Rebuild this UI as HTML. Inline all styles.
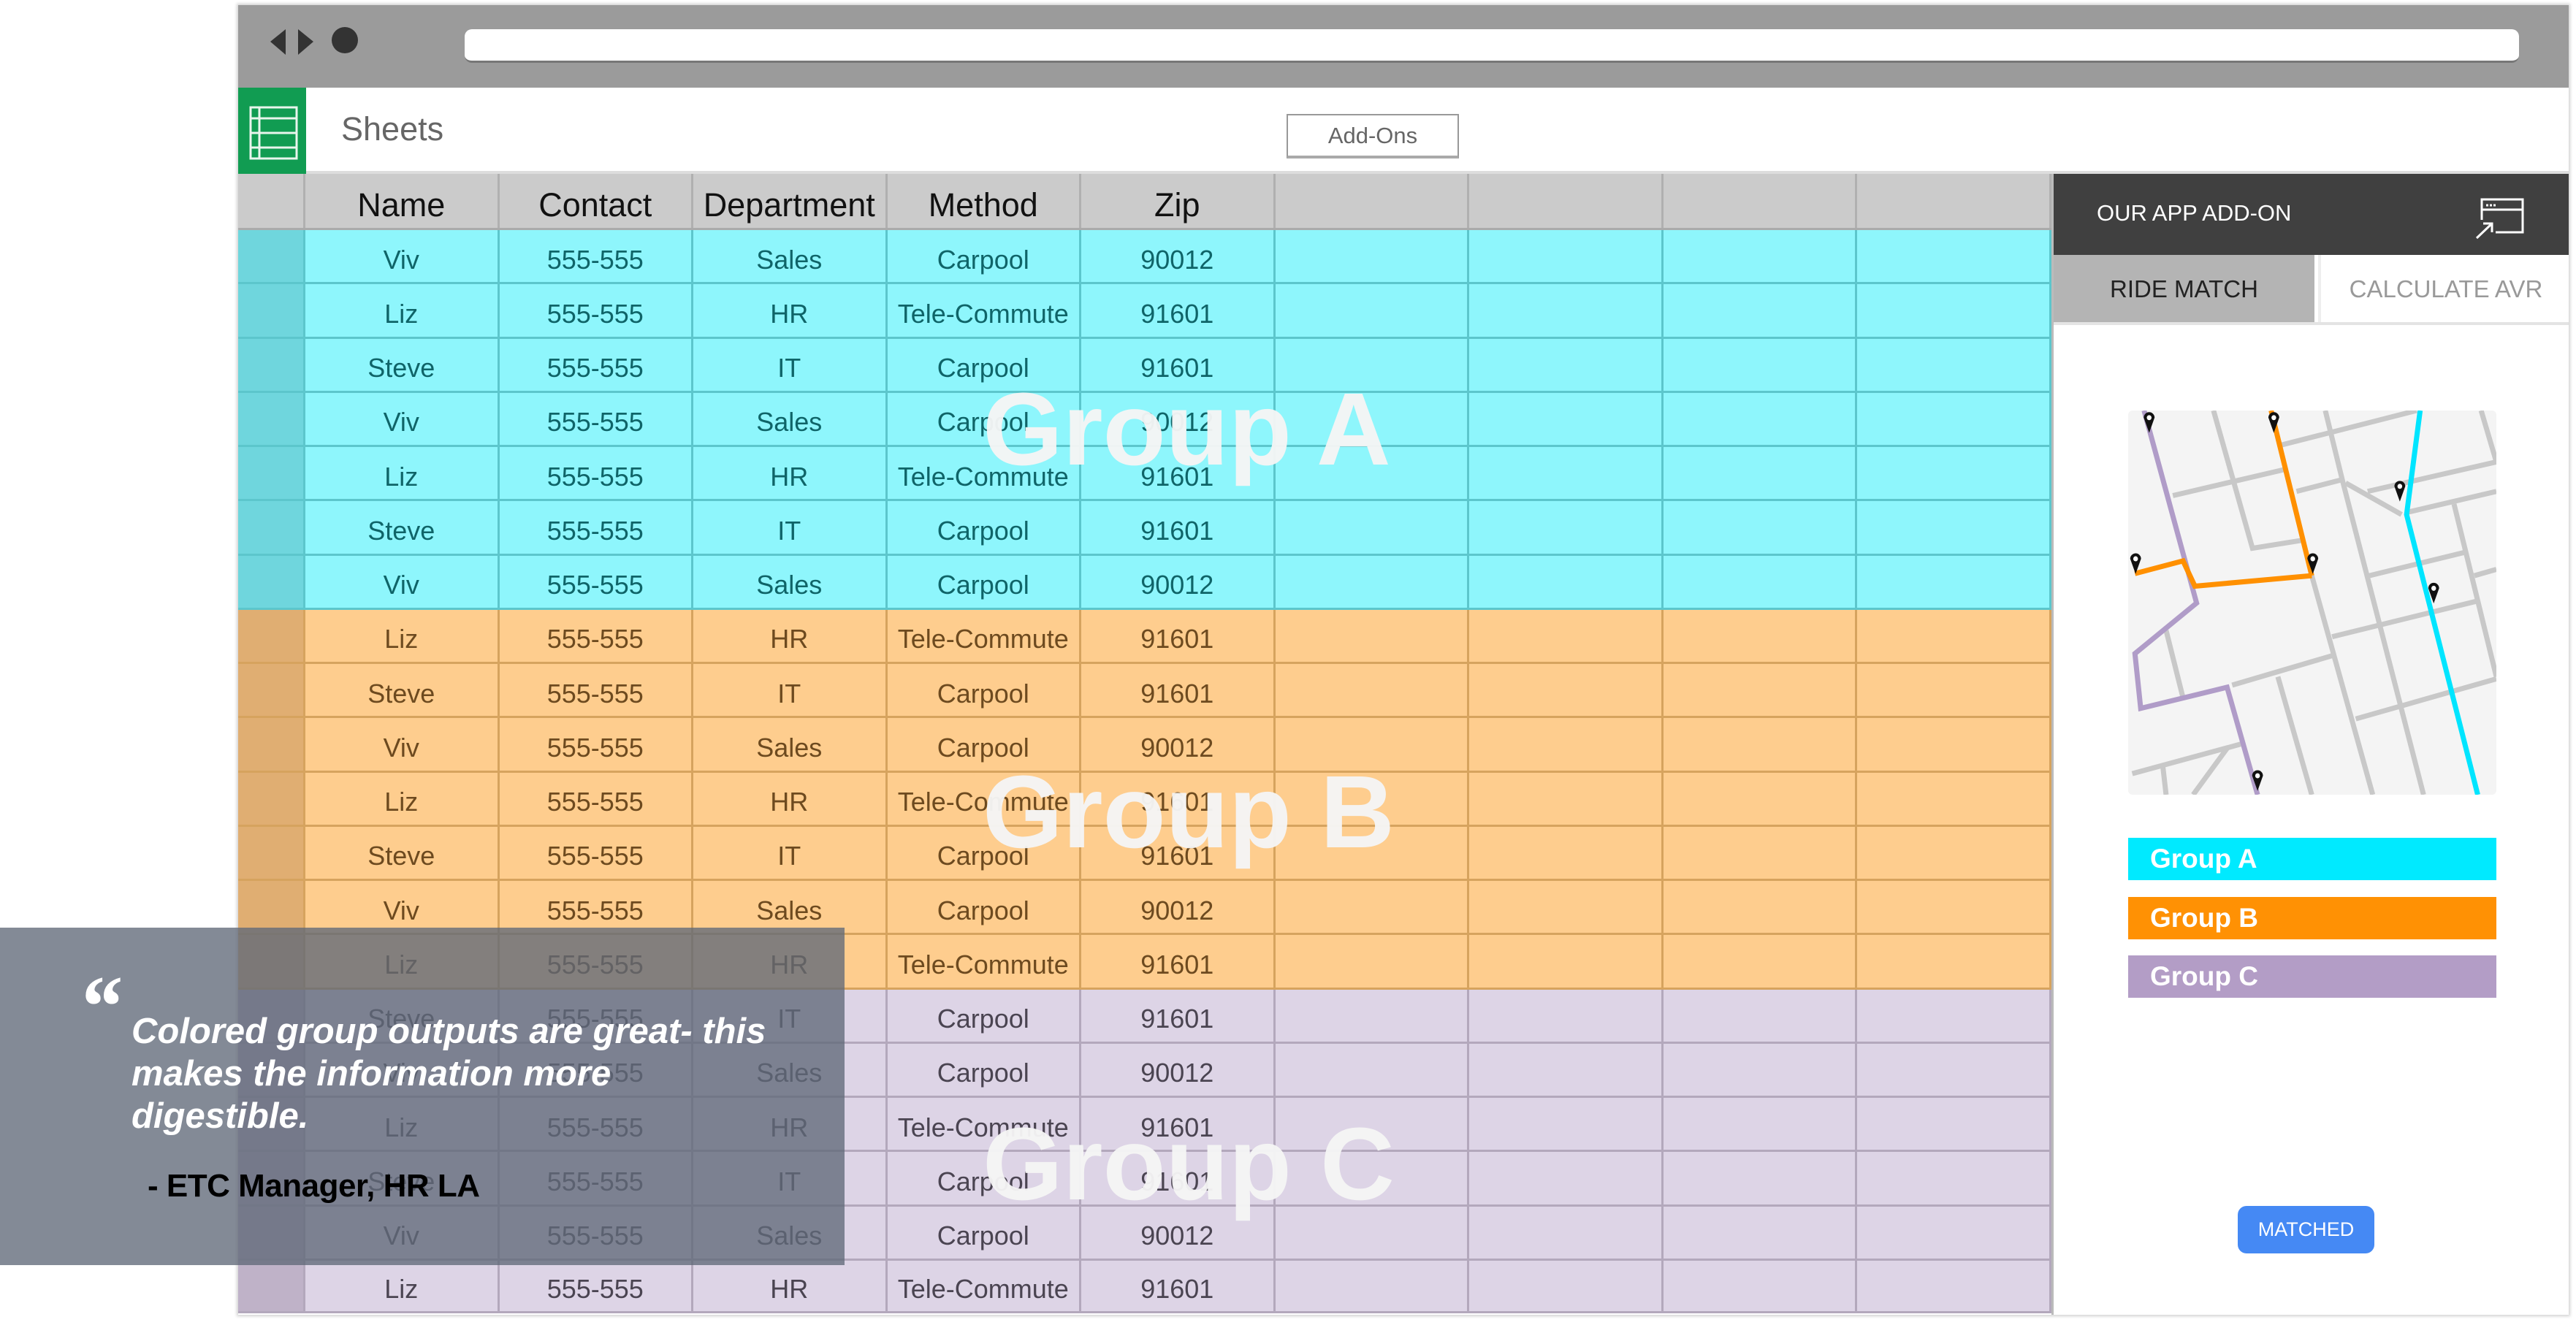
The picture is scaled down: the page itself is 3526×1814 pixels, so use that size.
<!DOCTYPE html>
<html><head><meta charset="utf-8"><style>
*{box-sizing:border-box;margin:0;padding:0}
body{width:3526px;height:1814px;background:#fff;position:relative;overflow:hidden;font-family:"Liberation Sans",Arial,sans-serif}
.abs{position:absolute}
#win{position:absolute;left:326px;top:7px;width:3190px;height:1793px;background:#fff;box-shadow:0 0 4px 2px rgba(0,0,0,.18)}
#top{position:absolute;left:0;top:0;width:100%;height:113px;background:#9b9b9b}
#url{position:absolute;left:310px;top:33px;width:2812px;height:46px;background:#fff;border-radius:10px;border-bottom:3px solid #777}
#app{position:absolute;left:0;top:113px;width:100%;height:118px;background:#fff;border-bottom:4px solid #ddd}
.tbl{position:absolute;left:326px;top:238px;width:2482px}
.row{display:flex;height:74.25px;border-bottom:3px solid}
.row>*{flex:0 0 265.5px;border-right:3px solid;display:flex;align-items:center;justify-content:center;font-size:36px;padding-top:10px}
.row>i{flex:0 0 92px}
.hd{height:77px;background:#cbcbcb;border-color:#aaa}
.hd>*{border-color:#b0b0b0;font-size:45px;color:#111;padding-top:12px}
.a{background:#8ef6fc;border-color:#5cc6cc;color:#0f6468}
.a>*{border-color:#5cc6cc}.a>i{background:#6fd6dd}
.b{background:#fecd8e;border-color:#d6a35e;color:#6d4a1f}
.b>*{border-color:#d6a35e}.b>i{background:#e0ae72}
.c{background:#ddd4e6;border-color:#b3a8bc;color:#4a4451}
.c>*{border-color:#b3a8bc}.c>i{background:#bfb2c8}
.big{position:absolute;font-weight:bold;font-size:141px;color:rgba(245,245,245,.96);left:1345px;white-space:nowrap}
#panel{position:absolute;left:2808px;top:238px;width:708px;height:1562px;background:#fff;border-left:3px solid #bbb}
.leg{position:absolute;left:102px;width:504px;height:58px;color:#fff;font-weight:bold;font-size:37px;padding-left:30px;line-height:58px}
</style></head><body>
<div id="win">
 <div id="top">
  <svg class="abs" style="left:0;top:0" width="200" height="113"><polygon points="44,50 65,33 65,68" fill="#333"/><polygon points="82,33 103,50 82,68" fill="#333"/><circle cx="146" cy="48" r="18" fill="#333"/></svg>
  <div id="url"></div>
 </div>
 <div id="app">
  <div class="abs" style="left:0;top:0;width:93px;height:118px;background:#119c52"></div>
  <svg class="abs" style="left:0;top:0" width="93" height="118" fill="none" stroke="#e8f5ec" stroke-width="3"><rect x="17" y="27" width="63" height="70"/><line x1="17" y1="42" x2="80" y2="42"/><line x1="17" y1="62" x2="80" y2="62"/><line x1="17" y1="82" x2="80" y2="82"/><line x1="29" y1="27" x2="29" y2="97"/></svg>
  <div class="abs" style="left:141px;top:31px;font-size:45px;color:#666">Sheets</div>
  <div class="abs" style="left:1435px;top:36px;width:236px;height:61px;border:2px solid #999;border-bottom:4px solid #aaa;font-size:31px;color:#666;text-align:center;line-height:56px">Add-Ons</div>
 </div>
</div>
<div class="tbl">
<div class="row hd"><i></i><b style="font-weight:normal">Name</b><b style="font-weight:normal">Contact</b><b style="font-weight:normal">Department</b><b style="font-weight:normal">Method</b><b style="font-weight:normal">Zip</b><b></b><b></b><b></b><b></b></div>
<div class="row a"><i></i><span>Viv</span><span>555-555</span><span>Sales</span><span>Carpool</span><span>90012</span><span></span><span></span><span></span><span></span></div>
<div class="row a"><i></i><span>Liz</span><span>555-555</span><span>HR</span><span>Tele-Commute</span><span>91601</span><span></span><span></span><span></span><span></span></div>
<div class="row a"><i></i><span>Steve</span><span>555-555</span><span>IT</span><span>Carpool</span><span>91601</span><span></span><span></span><span></span><span></span></div>
<div class="row a"><i></i><span>Viv</span><span>555-555</span><span>Sales</span><span>Carpool</span><span>90012</span><span></span><span></span><span></span><span></span></div>
<div class="row a"><i></i><span>Liz</span><span>555-555</span><span>HR</span><span>Tele-Commute</span><span>91601</span><span></span><span></span><span></span><span></span></div>
<div class="row a"><i></i><span>Steve</span><span>555-555</span><span>IT</span><span>Carpool</span><span>91601</span><span></span><span></span><span></span><span></span></div>
<div class="row a"><i></i><span>Viv</span><span>555-555</span><span>Sales</span><span>Carpool</span><span>90012</span><span></span><span></span><span></span><span></span></div>
<div class="row b"><i></i><span>Liz</span><span>555-555</span><span>HR</span><span>Tele-Commute</span><span>91601</span><span></span><span></span><span></span><span></span></div>
<div class="row b"><i></i><span>Steve</span><span>555-555</span><span>IT</span><span>Carpool</span><span>91601</span><span></span><span></span><span></span><span></span></div>
<div class="row b"><i></i><span>Viv</span><span>555-555</span><span>Sales</span><span>Carpool</span><span>90012</span><span></span><span></span><span></span><span></span></div>
<div class="row b"><i></i><span>Liz</span><span>555-555</span><span>HR</span><span>Tele-Commute</span><span>91601</span><span></span><span></span><span></span><span></span></div>
<div class="row b"><i></i><span>Steve</span><span>555-555</span><span>IT</span><span>Carpool</span><span>91601</span><span></span><span></span><span></span><span></span></div>
<div class="row b"><i></i><span>Viv</span><span>555-555</span><span>Sales</span><span>Carpool</span><span>90012</span><span></span><span></span><span></span><span></span></div>
<div class="row b"><i></i><span>Liz</span><span>555-555</span><span>HR</span><span>Tele-Commute</span><span>91601</span><span></span><span></span><span></span><span></span></div>
<div class="row c"><i></i><span>Steve</span><span>555-555</span><span>IT</span><span>Carpool</span><span>91601</span><span></span><span></span><span></span><span></span></div>
<div class="row c"><i></i><span>Viv</span><span>555-555</span><span>Sales</span><span>Carpool</span><span>90012</span><span></span><span></span><span></span><span></span></div>
<div class="row c"><i></i><span>Liz</span><span>555-555</span><span>HR</span><span>Tele-Commute</span><span>91601</span><span></span><span></span><span></span><span></span></div>
<div class="row c"><i></i><span>Steve</span><span>555-555</span><span>IT</span><span>Carpool</span><span>91601</span><span></span><span></span><span></span><span></span></div>
<div class="row c"><i></i><span>Viv</span><span>555-555</span><span>Sales</span><span>Carpool</span><span>90012</span><span></span><span></span><span></span><span></span></div>
<div class="row c" style="height:72px"><i></i><span>Liz</span><span>555-555</span><span>HR</span><span>Tele-Commute</span><span>91601</span><span></span><span></span><span></span><span></span></div>
</div>
<div class="big" style="top:506px">Group A</div>
<div class="big" style="top:1030px">Group B</div>
<div class="big" style="top:1512px">Group C</div>

<div id="panel">
 <div class="abs" style="left:0;top:0;width:100%;height:111px;background:#404040"></div>
 <div class="abs" style="left:59px;top:36px;font-size:31px;color:#fff">OUR APP ADD-ON</div>
 <svg class="abs" style="left:570px;top:28px" width="80" height="70" fill="none" stroke="#fff" stroke-width="3"><path d="M16,35 V7 H72 V52 H35"/><line x1="16" y1="21" x2="72" y2="21"/><line x1="22" y1="15" x2="36" y2="15" stroke-dasharray="3 2"/><path d="M9,60 L30,40 M18,40 H30 V52"/></svg>
 <div class="abs" style="left:0;top:111px;width:357px;height:94px;background:#b4b4b4;font-size:33px;color:#222;text-align:center;line-height:94px">RIDE MATCH</div>
 <div class="abs" style="left:362px;top:111px;width:346px;height:94px;font-size:33px;color:#999;text-align:center;line-height:94px;border-left:4px solid #eee">CALCULATE AVR</div>
 <div class="abs" style="left:0;top:203px;width:100%;height:4px;background:#e4e4e4"></div>
 <svg class="abs" style="left:102px;top:324px;border-radius:6px" width="504" height="526" viewBox="238 598 1087 912" preserveAspectRatio="none">
  <rect x="238" y="598" width="1087" height="912" fill="#f4f4f4"/>
  <g fill="none" stroke="#c8c8c8" style="stroke-width:7px">
   <path vector-effect="non-scaling-stroke" d="M490,598 L605,925 L760,905"/>
   <path vector-effect="non-scaling-stroke" d="M370,800 L700,738 M690,680 L1090,598 M735,790 L870,762 M880,770 L1045,845"/>
   <path vector-effect="non-scaling-stroke" d="M820,598 L870,762 L1110,1510"/>
   <path vector-effect="non-scaling-stroke" d="M945,790 L1325,720 L1280,598 M1060,840 L1325,790 M1200,820 L1325,1230"/>
   <path vector-effect="non-scaling-stroke" d="M780,990 L960,1510 M950,990 L1230,935 M1260,990 L1325,975 M840,1135 L1270,1050 M545,1250 L840,1180 M910,1330 L1325,1235"/>
   <path vector-effect="non-scaling-stroke" d="M680,1230 L780,1510 M250,1460 L570,1390 M340,1440 L350,1510 M430,1510 L530,1400 M350,1120 L400,1280"/>
  </g>
  <g fill="none" style="stroke-width:7px">
   <path vector-effect="non-scaling-stroke" stroke="#b09cc8" d="M285,598 L440,1055 L258,1175 L275,1305 L530,1255 L620,1510"/>
   <path vector-effect="non-scaling-stroke" stroke="#ff9000" d="M258,985 L400,955 L435,1015 L780,990 M660,598 L780,990"/>
   <path vector-effect="non-scaling-stroke" stroke="#00e5ff" d="M1100,598 L1060,845 L1270,1510"/>
  </g>
  <g fill="#111">
   <g transform="translate(300,615)"><path d="M-16,0 A16,13 0 1 1 16,0 L0,36 Z"/><ellipse cx="0" cy="0" rx="7" ry="6" fill="#fff"/></g>
   <g transform="translate(668,615)"><path d="M-16,0 A16,13 0 1 1 16,0 L0,36 Z"/><ellipse cx="0" cy="0" rx="7" ry="6" fill="#fff"/></g>
   <g transform="translate(260,950)"><path d="M-16,0 A16,13 0 1 1 16,0 L0,36 Z"/><ellipse cx="0" cy="0" rx="7" ry="6" fill="#fff"/></g>
   <g transform="translate(783,950)"><path d="M-16,0 A16,13 0 1 1 16,0 L0,36 Z"/><ellipse cx="0" cy="0" rx="7" ry="6" fill="#fff"/></g>
   <g transform="translate(1040,778)"><path d="M-16,0 A16,13 0 1 1 16,0 L0,36 Z"/><ellipse cx="0" cy="0" rx="7" ry="6" fill="#fff"/></g>
   <g transform="translate(1140,1020)"><path d="M-16,0 A16,13 0 1 1 16,0 L0,36 Z"/><ellipse cx="0" cy="0" rx="7" ry="6" fill="#fff"/></g>
   <g transform="translate(620,1465)"><path d="M-16,0 A16,13 0 1 1 16,0 L0,36 Z"/><ellipse cx="0" cy="0" rx="7" ry="6" fill="#fff"/></g>
  </g>
 </svg>
 <div class="leg" style="top:909px;background:#00eaff">Group A</div>
 <div class="leg" style="top:990px;background:#ff9104">Group B</div>
 <div class="leg" style="top:1070px;background:#b39dc6">Group C</div>
 <div class="abs" style="left:252px;top:1413px;width:187px;height:65px;background:#4589f4;border-radius:12px;color:#fff;font-size:27px;text-align:center;line-height:65px">MATCHED</div>
</div>

<div class="abs" style="left:0;top:1270px;width:1156px;height:462px;background:rgba(96,105,120,.78)"></div>
<div class="abs" style="left:106px;top:1318px;font-size:120px;font-weight:bold;font-style:italic;color:#fff;font-family:'Liberation Serif',serif;line-height:1">&ldquo;</div>
<div class="abs" style="left:180px;top:1383px;width:980px;font-size:49px;font-weight:bold;font-style:italic;color:#fff;line-height:58px;white-space:nowrap">Colored group outputs are great- this<br>makes the information more<br>digestible.</div>
<div class="abs" style="left:202px;top:1599px;font-size:44px;font-weight:bold;color:#000;letter-spacing:-0.5px">- ETC Manager, HR LA</div>
</body></html>
